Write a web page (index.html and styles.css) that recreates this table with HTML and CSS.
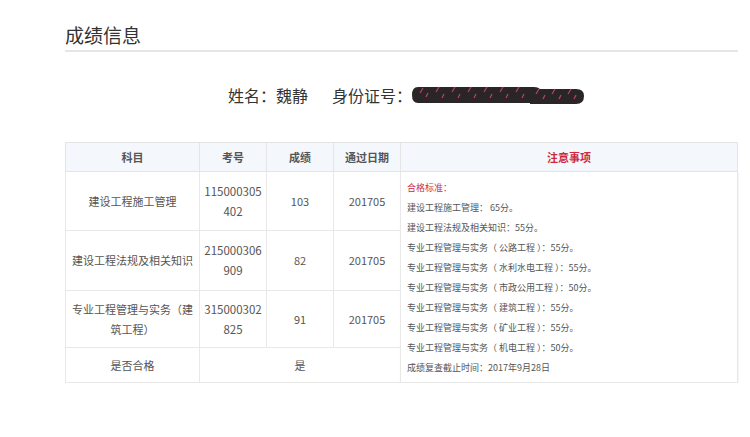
FILE: index.html
```html
<!DOCTYPE html>
<html lang="zh">
<head>
<meta charset="utf-8">
<link rel="stylesheet" href="styles.css">
</head>
<body>
<div class="page">
  <h2 class="title">成绩信息</h2>
  <div class="info">
    <span class="name">姓名：魏静</span>
    <span class="idlabel">身份证号：</span><span class="redact"><svg width="172" height="20" viewBox="0 0 172 20"><path d="M6 2 H122 Q130 2 130 10 Q130 18 122 18 H6 Q0 18 0 10 Q0 2 6 2 Z" fill="#2a2527"/><path d="M118 4 H164 Q172 4 172 11 Q172 19 164 19 H118 Z" fill="#2a2527"/><g stroke="#c0406a" stroke-width="1.2" fill="none"><path d="M8 8 l3 -5"/><path d="M14 12 l2 -4"/><path d="M24 7 l3 -5"/><path d="M30 13 l2 -4"/><path d="M40 7 l3 -5"/><path d="M46 13 l2 -4"/><path d="M56 7 l3 -5"/><path d="M62 13 l2 -4"/><path d="M72 7 l3 -5"/><path d="M78 13 l2 -4"/><path d="M88 7 l3 -5"/><path d="M94 13 l2 -4"/><path d="M104 7 l3 -5"/><path d="M110 13 l2 -4"/><path d="M124 9 l3 -5"/><path d="M131 14 l2 -4"/><path d="M140 9 l3 -5"/><path d="M147 14 l2 -4"/><path d="M156 9 l3 -5"/><path d="M162 14 l2 -4"/></g></svg></span>
  </div>
  <table class="score">
    <colgroup>
      <col class="c1"><col class="c2"><col class="c3"><col class="c4"><col class="c5">
    </colgroup>
    <thead>
      <tr>
        <th>科目</th><th>考号</th><th>成绩</th><th>通过日期</th><th class="notehead">注意事项</th>
      </tr>
    </thead>
    <tbody>
      <tr class="r1">
        <td>建设工程施工管理</td><td class="num">115000305402</td><td>103</td><td>201705</td>
        <td class="notes" rowspan="4">
          <p class="red">合格标准：</p>
          <p>建设工程施工管理： 65分。</p>
          <p>建设工程法规及相关知识：55分。</p>
          <p>专业工程管理与实务（ 公路工程 ）：55分。</p>
          <p>专业工程管理与实务（ 水利水电工程 ）：55分。</p>
          <p>专业工程管理与实务（ 市政公用工程 ）：50分。</p>
          <p>专业工程管理与实务（ 建筑工程 ）：55分。</p>
          <p>专业工程管理与实务（ 矿业工程 ）：55分。</p>
          <p>专业工程管理与实务（ 机电工程 ）：50分。</p>
          <p>成绩复查截止时间：2017年9月28日</p>
        </td>
      </tr>
      <tr class="r2">
        <td>建设工程法规及相关知识</td><td class="num">215000306909</td><td>82</td><td>201705</td>
      </tr>
      <tr class="r3">
        <td>专业工程管理与实务（建筑工程）</td><td class="num">315000302825</td><td>91</td><td>201705</td>
      </tr>
      <tr class="r4">
        <td>是否合格</td><td colspan="3">是</td>
      </tr>
    </tbody>
  </table>
</div>
</body>
</html>
```
FILE: styles.css
```css
html, body {
  margin: 0;
  padding: 0;
  background: #ffffff;
}
body {
  font-family: "Noto Sans CJK SC", "Noto Sans", sans-serif;
  color: #444;
}
.page {
  padding: 0 12px 0 65px;
}
.title {
  margin: 0;
  padding-top: 23px;
  height: 27px;
  font-size: 19px;
  line-height: 24px;
  font-weight: normal;
  color: #333;
  border-bottom: 2px solid #e6e6e6;
}
.info {
  margin-top: 31px;
  display: flex;
  align-items: center;
  padding-left: 163px;
  height: 24px;
  font-size: 16px;
  color: #333;
}
.name {
  margin-right: 24px;
}
.redact {
  display: flex;
  margin-left: 0;
}
.score {
  margin-top: 35px;
  width: 673px;
  border-collapse: collapse;
  table-layout: fixed;
  border: 1px solid #e4e4e4;
  font-size: 11px;
  color: #555;
}
.c1 { width: 134px; }
.c2 { width: 67px; }
.c3 { width: 67px; }
.c4 { width: 67px; }
.c5 { width: auto; }
.score th {
  height: 28px;
  padding: 0;
  background: #f4f7fb;
  font-weight: bold;
  color: #555;
  border: 1px solid #e4e4e4;
  text-align: center;
}
.score th.notehead {
  color: #cc2a3c;
}
.score td {
  border: 1px solid #e8e8e8;
  text-align: center;
  padding: 0 6px;
  line-height: 20px;
}
.score td.num {
  word-break: break-all;
  font-size: 11.5px;
  padding: 0 3px;
}
.r1 td, .r2 td { height: 58px; }
.r3 td { height: 56px; }
.r4 td { height: 34px; }
.score td.notes {
  text-align: left;
  vertical-align: top;
  padding: 6px 6px 4px 6px;
  font-size: 9px;
  color: #555;
  box-shadow: 0 0 2px rgba(0,0,0,0.12);
}
.notes p {
  margin: 0;
  line-height: 20px;
  height: 20px;
  white-space: nowrap;
}
.notes p.red {
  color: #cc2a3c;
}
```
